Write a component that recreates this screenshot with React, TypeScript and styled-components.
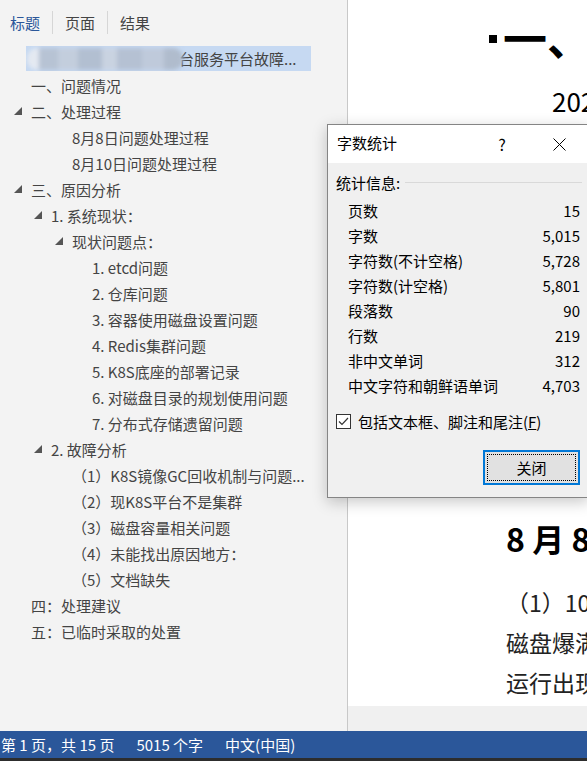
import styled, { createGlobalStyle } from "styled-components";

const GlobalStyle = createGlobalStyle`
  html, body {
    margin: 0;
    padding: 0;
  }
  body {
    width: 587px;
    height: 761px;
    overflow: hidden;
    font-family: "Noto Sans CJK SC", "Noto Sans", sans-serif;
    background: #f3f3f3;
  }
`;

const Window = styled.div`
  position: relative;
  width: 587px;
  height: 761px;
  display: flex;
  flex-direction: column;
  overflow: hidden;
`;

const Main = styled.div`
  flex: 1;
  display: flex;
  min-height: 0;
`;

/* ---------- navigation pane ---------- */

const NavPane = styled.aside`
  width: 347px;
  flex-shrink: 0;
  border-right: 1px solid #c8c8c8;
  background: #f3f3f3;
  display: flex;
  flex-direction: column;
`;

const Tabs = styled.div`
  display: flex;
  align-items: center;
  height: 44px;
  padding-left: 10px;
`;

const Tab = styled.div<{ $active?: boolean; $first?: boolean }>`
  height: 23px;
  display: flex;
  align-items: center;
  padding: 0 12px;
  padding-left: ${(p) => (p.$first ? "0" : "12px")};
  border-left: ${(p) => (p.$first ? "none" : "1px solid #d6d6d6")};
  font-size: 15px;
  color: ${(p) => (p.$active ? "#2b579a" : "#444")};
`;

const Tree = styled.div`
  margin-top: 2px;
  display: flex;
  flex-direction: column;
`;

const indent = [14, 14, 34, 55, 75];

const TreeRow = styled.div<{ $level: number }>`
  height: 26px;
  display: flex;
  align-items: center;
  padding-left: ${(p) => indent[p.$level]}px;
  font-size: 15px;
  color: #444;
  white-space: nowrap;
`;

const SelectedRow = styled.div`
  height: 25px;
  width: 284px;
  margin-left: 26px;
  margin-bottom: 1px;
  padding-left: 1px;
  display: flex;
  align-items: center;
  background: #c6d9f2;
  font-size: 15px;
  color: #444;
  white-space: nowrap;
  overflow: hidden;
`;

const Redacted = styled.span`
  display: inline-block;
  width: 156px;
  height: 22px;
  margin-right: -4px;
  border-radius: 10px;
  background: linear-gradient(
    90deg,
    #e4e9f1 0 8%,
    #b7c3d4 8% 20%,
    #c3cedd 20% 33%,
    #b2bfd1 33% 48%,
    #c9d3e1 48% 58%,
    #b5c1d3 58% 74%,
    #bfcadb 74% 88%,
    #b0bccd 88% 100%
  );
  filter: blur(2px);
`;

const Caret = styled.span<{ $open?: boolean }>`
  width: 8px;
  height: 8px;
  margin-right: 9px;
  flex-shrink: 0;
  background: ${(p) => (p.$open ? "#555" : "transparent")};
  clip-path: polygon(100% 0, 100% 100%, 0 100%);
`;

/* ---------- document area ---------- */

const DocArea = styled.main`
  flex: 1;
  min-width: 0;
  background: #f0f0f0;
  display: flex;
  flex-direction: column;
  overflow: hidden;
`;

const Page = styled.div`
  height: 706px;
  flex-shrink: 0;
  background: #fff;
  padding-left: 141px;
  overflow: hidden;
  white-space: nowrap;
  color: #000;
`;

const HeadingRow = styled.div`
  display: flex;
  align-items: flex-start;
  margin-top: 12px;
`;

const KeepMark = styled.span`
  width: 8px;
  height: 8px;
  margin-top: 23px;
  margin-right: 6px;
  flex-shrink: 0;
  background: #000;
`;

const Heading = styled.div`
  font-size: 44px;
  line-height: 50px;
  font-weight: 700;
`;

const DateLine = styled.div`
  margin-top: 24px;
  margin-left: 63px;
  font-size: 26px;
  line-height: 30px;
`;

const SubHeading = styled.div`
  margin-top: 402px;
  margin-left: 17px;
  font-size: 32px;
  line-height: 40px;
  font-weight: 700;
`;

const Body = styled.div`
  margin-top: 24px;
  margin-left: 17px;
  font-size: 23px;
  line-height: 40px;
  color: #222;
`;

/* ---------- word count dialog ---------- */

const Dialog = styled.div`
  position: absolute;
  left: 327px;
  top: 124px;
  width: 262px;
  height: 374px;
  box-sizing: border-box;
  border: 1px solid #858585;
  background: #f0f0f0;
  box-shadow: 0 4px 14px rgba(0, 0, 0, 0.22);
  display: flex;
  flex-direction: column;
  font-size: 15px;
  color: #000;
`;

const TitleBar = styled.div`
  height: 38px;
  flex-shrink: 0;
  background: #fff;
  display: flex;
  align-items: center;
  padding-left: 9px;
  padding-right: 6px;
`;

const TitleText = styled.span`
  flex: 1;
  margin-top: -3px;
`;

const TitleButton = styled.span<{ $width: number }>`
  width: ${(p) => p.$width}px;
  display: flex;
  justify-content: center;
  align-items: center;
  font-size: 16px;
`;

const Section = styled.div`
  height: 20px;
  margin-top: 9px;
  padding: 0 6px 0 8px;
  display: flex;
  align-items: center;
`;

const SectionRule = styled.span`
  flex: 1;
  height: 1px;
  margin-left: 5px;
  background: #d9d9d9;
`;

const Stats = styled.div`
  margin-top: 6px;
  display: flex;
  flex-direction: column;
`;

const StatRow = styled.div`
  height: 25px;
  display: flex;
  align-items: center;
  justify-content: space-between;
  padding: 0 8px 0 20px;
`;

const CheckRow = styled.label`
  height: 22px;
  margin-top: 12px;
  padding-left: 8px;
  display: flex;
  align-items: center;
  gap: 7px;
`;

const CheckBox = styled.span`
  width: 13px;
  height: 13px;
  border: 1px solid #333;
  background: #fff;
  display: flex;
  align-items: center;
  justify-content: center;
`;

const AccessKey = styled.span`
  text-decoration: underline;
`;

const CloseButton = styled.button`
  align-self: flex-start;
  width: 97px;
  height: 35px;
  margin-top: 18px;
  margin-left: 155px;
  border: 2px solid #0078d7;
  background: #e1e1e1;
  outline: 1px dotted #000;
  outline-offset: -5px;
  font-family: inherit;
  font-size: 15px;
  color: #000;
  padding: 0;
`;

/* ---------- status bar ---------- */

const StatusBar = styled.footer`
  height: 27px;
  flex-shrink: 0;
  background: #2b579a;
  color: #fff;
  display: flex;
  align-items: center;
  gap: 22px;
  padding-left: 1px;
  font-size: 15px;
`;

const BottomEdge = styled.div`
  height: 3px;
  flex-shrink: 0;
  background: #2d2d2d;
`;

type OutlineItem = { level: number; text: string; open?: boolean };

const outline: OutlineItem[] = [
  { level: 1, text: "一、问题情况" },
  { level: 1, text: "二、处理过程", open: true },
  { level: 3, text: "8月8日问题处理过程" },
  { level: 3, text: "8月10日问题处理过程" },
  { level: 1, text: "三、原因分析", open: true },
  { level: 2, text: "1. 系统现状：", open: true },
  { level: 3, text: "现状问题点：", open: true },
  { level: 4, text: "1. etcd问题" },
  { level: 4, text: "2. 仓库问题" },
  { level: 4, text: "3. 容器使用磁盘设置问题" },
  { level: 4, text: "4. Redis集群问题" },
  { level: 4, text: "5. K8S底座的部署记录" },
  { level: 4, text: "6. 对磁盘目录的规划使用问题" },
  { level: 4, text: "7. 分布式存储遗留问题" },
  { level: 2, text: "2. 故障分析", open: true },
  { level: 3, text: "（1）K8S镜像GC回收机制与问题..." },
  { level: 3, text: "（2）现K8S平台不是集群" },
  { level: 3, text: "（3）磁盘容量相关问题" },
  { level: 3, text: "（4）未能找出原因地方：" },
  { level: 3, text: "（5）文档缺失" },
  { level: 1, text: "四：处理建议" },
  { level: 1, text: "五：已临时采取的处置" },
];

const stats: [string, string][] = [
  ["页数", "15"],
  ["字数", "5,015"],
  ["字符数(不计空格)", "5,728"],
  ["字符数(计空格)", "5,801"],
  ["段落数", "90"],
  ["行数", "219"],
  ["非中文单词", "312"],
  ["中文字符和朝鲜语单词", "4,703"],
];

export default function App() {
  return (
    <Window>
      <GlobalStyle />
      <Main>
        <NavPane>
          <Tabs>
            <Tab $first $active>标题</Tab>
            <Tab>页面</Tab>
            <Tab>结果</Tab>
          </Tabs>
          <Tree>
            <SelectedRow>
              <Redacted />
              台服务平台故障...
            </SelectedRow>
            {outline.map((item, i) => (
              <TreeRow key={i} $level={item.level}>
                <Caret $open={item.open} />
                {item.text}
              </TreeRow>
            ))}
          </Tree>
        </NavPane>

        <DocArea>
          <Page>
            <HeadingRow>
              <KeepMark />
              <Heading>一、问题情况</Heading>
            </HeadingRow>
            <DateLine>2023年8月</DateLine>
            <SubHeading>8 月 8 日问题处理过程</SubHeading>
            <Body>
              <div>（1）10日上午</div>
              <div>磁盘爆满导致</div>
              <div>运行出现异常</div>
            </Body>
          </Page>
        </DocArea>
      </Main>

      <StatusBar>
        <span>第 1 页，共 15 页</span>
        <span>5015 个字</span>
        <span>中文(中国)</span>
      </StatusBar>
      <BottomEdge />

      <Dialog>
        <TitleBar>
          <TitleText>字数统计</TitleText>
          <TitleButton $width={68}>?</TitleButton>
          <TitleButton $width={46}>
            <svg width="13" height="13" viewBox="0 0 13 13">
              <path d="M0.5 0.5 L12.5 12.5 M12.5 0.5 L0.5 12.5" stroke="#000" strokeWidth="1" />
            </svg>
          </TitleButton>
        </TitleBar>
        <Section>
          统计信息:
          <SectionRule />
        </Section>
        <Stats>
          {stats.map(([label, value]) => (
            <StatRow key={label}>
              <span>{label}</span>
              <span>{value}</span>
            </StatRow>
          ))}
        </Stats>
        <CheckRow>
          <CheckBox>
            <svg width="11" height="11" viewBox="0 0 11 11">
              <path d="M1 5.5 L4 8.5 L10 2" fill="none" stroke="#333" strokeWidth="1.2" />
            </svg>
          </CheckBox>
          <span>
            包括文本框、脚注和尾注(<AccessKey>F</AccessKey>)
          </span>
        </CheckRow>
        <CloseButton>关闭</CloseButton>
      </Dialog>
    </Window>
  );
}
